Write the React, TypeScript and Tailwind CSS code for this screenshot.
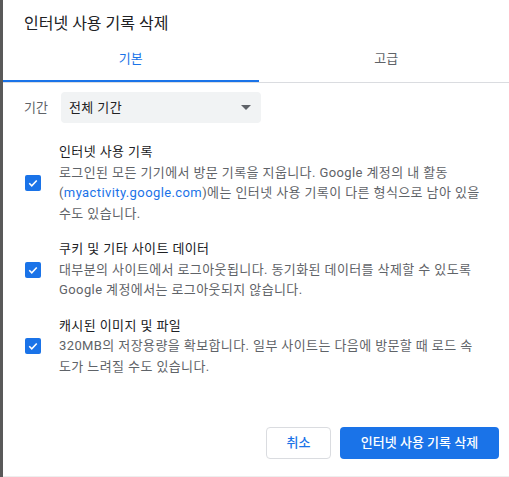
import { useState } from "react";

const font = { fontFamily: "Roboto, 'Noto Sans CJK KR', sans-serif" };

const CheckBox = ({ checked, onClick }: { checked: boolean; onClick: () => void }) => (
  <button
    onClick={onClick}
    className={`w-4 h-4 rounded-[2px] flex items-center justify-center shrink-0 ${
      checked ? "bg-[#1a73e8]" : "border-2 border-[#5f6368] bg-white"
    }`}
  >
    {checked && (
      <svg width="12" height="12" viewBox="0 0 24 24">
        <path d="M4.5 12.5l5 5L19.5 7" fill="none" stroke="white" strokeWidth="3.2" />
      </svg>
    )}
  </button>
);

const Option = ({
  title,
  checked,
  onToggle,
  children,
}: {
  title: string;
  checked: boolean;
  onToggle: () => void;
  children: React.ReactNode;
}) => (
  <div className="flex items-center">
    <div className="w-[36px] pl-[2px]">
      <CheckBox checked={checked} onClick={onToggle} />
    </div>
    <div className="text-[13px] leading-[20.5px] tracking-[0.4px] whitespace-nowrap">
      <div className="text-[#202124]">{title}</div>
      <div className="text-[#5f6368]">{children}</div>
    </div>
  </div>
);

const App = () => {
  const [tab, setTab] = useState(0);
  const [checks, setChecks] = useState([true, true, true]);

  const toggle = (i: number) => {
    const next = [...checks];
    next[i] = !next[i];
    setChecks(next);
  };

  return (
    <div className="flex h-[477px] w-[509px] overflow-hidden bg-white" style={font}>
      <div className="w-[3px] bg-[#595959] shrink-0" />
      {/* dialog runs a little past the right edge of the window */}
      <div className="w-[511px] shrink-0 flex flex-col border-b border-[#eeeeee]">
        <div className="pl-[21px] pt-[12px] text-[16px] leading-6 text-[#202124]">
          인터넷 사용 기록 삭제
        </div>

        <div className="flex border-b border-[#dadce0] mt-[2px]">
          {["기본", "고급"].map((t, i) => (
            <button
              key={t}
              onClick={() => setTab(i)}
              className={`flex-1 h-[44px] flex items-center justify-center text-[13px] ${
                tab === i
                  ? "text-[#1a73e8] border-b-2 border-[#1a73e8]"
                  : "text-[#5f6368] border-b-2 border-transparent"
              }`}
            >
              {t}
            </button>
          ))}
        </div>

        <div className="flex items-center pl-[21px] mt-[9px]">
          <span className="w-[37px] text-[13px] text-[#5f6368]">기간</span>
          <div className="w-[200px] h-[31px] rounded bg-[#f1f3f4] flex items-center justify-between pl-2 pr-[10px]">
            <span className="text-[13px] tracking-[0.4px] text-[#202124]">전체 기간</span>
            <svg width="10" height="5" viewBox="0 0 10 5">
              <path d="M0 0h10L5 5z" fill="#5f6368" />
            </svg>
          </div>
        </div>

        <div className="flex flex-col gap-[15px] pl-[20px] mt-[19px]">
          <Option title="인터넷 사용 기록" checked={checks[0]} onToggle={() => toggle(0)}>
            로그인된 모든 기기에서 방문 기록을 지웁니다. Google 계정의 내 활동
            <br />
            (<span className="text-[#1a73e8]">myactivity.google.com</span>)에는 인터넷 사용 기록이 다른 형식으로 남아 있을
            <br />
            수도 있습니다.
          </Option>
          <Option title="쿠키 및 기타 사이트 데이터" checked={checks[1]} onToggle={() => toggle(1)}>
            대부분의 사이트에서 로그아웃됩니다. 동기화된 데이터를 삭제할 수 있도록
            <br />
            Google 계정에서는 로그아웃되지 않습니다.
          </Option>
          <Option title="캐시된 이미지 및 파일" checked={checks[2]} onToggle={() => toggle(2)}>
            320MB의 저장용량을 확보합니다. 일부 사이트는 다음에 방문할 때 로드 속
            <br />
            도가 느려질 수도 있습니다.
          </Option>
        </div>

        <div className="flex justify-end gap-[9px] pr-[15px] mt-auto mb-[17px]">
          <button className="w-[65px] h-[32px] rounded border border-[#dadce0] text-[13px] font-medium text-[#1a73e8] bg-white">
            취소
          </button>
          <button className="w-[159px] h-[32px] rounded bg-[#1a73e8] text-[13px] font-medium text-white">
            인터넷 사용 기록 삭제
          </button>
        </div>
      </div>
    </div>
  );
};

export default App;
